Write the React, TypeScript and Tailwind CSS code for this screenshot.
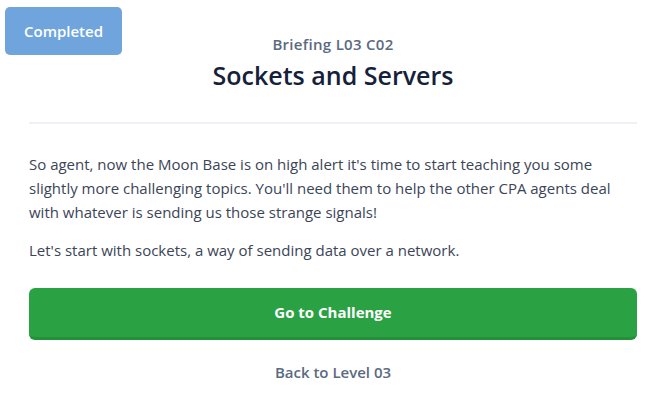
import React from "react";

export default function App() {
  return (
    <div
      className="relative w-[666px] h-[415px] bg-white overflow-hidden"
      style={{ fontFamily: "'Open Sans', Lato, sans-serif" }}
    >
      <div className="absolute left-[5px] top-[7px] w-[117px] h-[48px] rounded-[5px] bg-[#6fa5dc] flex items-center justify-center text-white text-[15px] font-semibold">
        Completed
      </div>
      <div className="px-[29px] pt-[33px]">
        <div className="text-center text-[15px] font-semibold text-[#5a6a80] leading-[22px] tracking-[0.3px]">
          Briefing L03 C02
        </div>
        <h1 className="text-center text-[25px] font-semibold text-[#15213a] leading-[30px] mt-[5px]">
          Sockets and Servers
        </h1>
        <div className="mt-[32px] h-[2px] bg-[#eef1f5]" />
        <div className="mt-[28px] text-[15px] text-[#3b4557] leading-[24px]">
          <p>
            So agent, now the Moon Base is on high alert it's time to start teaching you some slightly more
            challenging topics. You'll need them to help the other CPA agents deal with whatever is sending us
            those strange signals!
          </p>
          <p className="mt-[14px]">Let's start with sockets, a way of sending data over a network.</p>
        </div>
        <button className="mt-[26px] w-full h-[52px] rounded-[6px] bg-[#2aa142] border-b-[3px] border-[#23913a] text-white text-[15px] font-bold">
          Go to Challenge
        </button>
        <div className="mt-[21px] text-center text-[15px] font-semibold text-[#5a6a80]">Back to Level 03</div>
      </div>
    </div>
  );
}
